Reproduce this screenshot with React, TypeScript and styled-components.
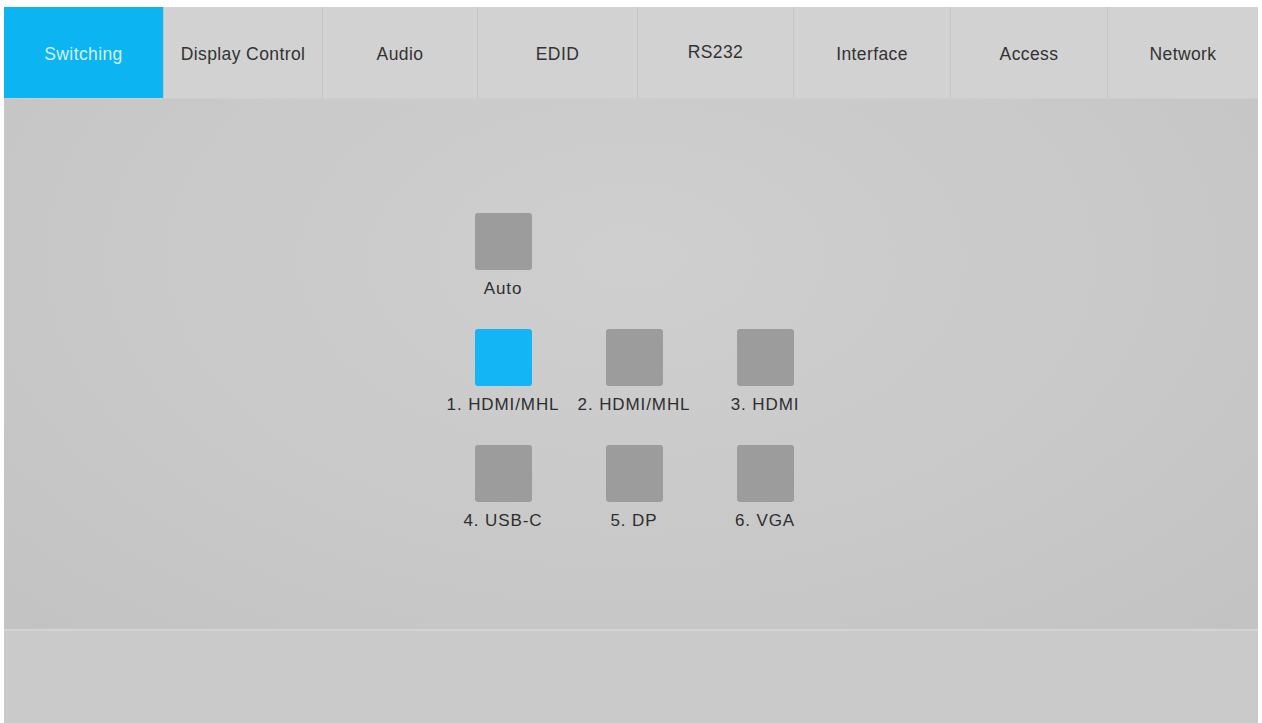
import { useState } from "react";
import styled, { createGlobalStyle } from "styled-components";

const GlobalStyle = createGlobalStyle`
  html, body {
    margin: 0;
    padding: 0;
    background: #ffffff;
  }
  body {
    font-family: "Liberation Sans", Arial, Helvetica, sans-serif;
  }
`;

const tabs = [
  "Switching",
  "Display Control",
  "Audio",
  "EDID",
  "RS232",
  "Interface",
  "Access",
  "Network",
];

const inputs = [
  { id: 1, label: "1. HDMI/MHL" },
  { id: 2, label: "2. HDMI/MHL" },
  { id: 3, label: "3. HDMI" },
  { id: 4, label: "4. USB-C" },
  { id: 5, label: "5. DP" },
  { id: 6, label: "6. VGA" },
];

export default function App() {
  const [activeTab, setActiveTab] = useState("Switching");
  const [source, setSource] = useState<number | "auto">(1);

  return (
    <>
      <GlobalStyle />
      <Panel>
        <TabBar>
          {tabs.map((t) => (
            <Tab
              key={t}
              $active={activeTab === t}
              $raised={t === "RS232"}
              onClick={() => setActiveTab(t)}
            >
              {t}
            </Tab>
          ))}
        </TabBar>
        <Main>
          <SourceGrid>
            <Cell onClick={() => setSource("auto")}>
              <Square $on={source === "auto"} />
              <Label>Auto</Label>
            </Cell>
            <Spacer />
            <Spacer />
            {inputs.map((i) => (
              <Cell key={i.id} onClick={() => setSource(i.id)}>
                <Square $on={source === i.id} />
                <Label>{i.label}</Label>
              </Cell>
            ))}
          </SourceGrid>
        </Main>
        <Footer />
      </Panel>
    </>
  );
}

const Panel = styled.div`
  margin: 7px 4px 0 4px;
  height: 716px;
  display: flex;
  flex-direction: column;
  background: #cacaca;
`;

const TabBar = styled.nav`
  display: grid;
  grid-template-columns: 159px 159px 155px 160px 156px 157px 157px 1fr;
  height: 91px;
  background: #d2d2d2;
  border-bottom: 1px solid #cdcdcd;
`;

const Tab = styled.div<{ $active: boolean; $raised: boolean }>`
  display: flex;
  align-items: center;
  justify-content: center;
  padding-top: ${(p) => (p.$raised ? "0" : "4px")};
  font-size: 17.5px;
  letter-spacing: 0.4px;
  color: ${(p) => (p.$active ? "#d4f1ff" : "#333333")};
  background: ${(p) => (p.$active ? "#0cb4f1" : "transparent")};
  border-left: 1px solid ${(p) => (p.$active ? "transparent" : "#c5c5c5")};
  cursor: pointer;

  &:first-child {
    border-left: none;
  }
`;

const Main = styled.main`
  height: 532px;
  display: flex;
  justify-content: center;
  padding-top: 114px;
  box-sizing: border-box;
  background: radial-gradient(
    ellipse at 50% 30%,
    #cfcfcf 0%,
    #cacaca 45%,
    #c3c3c3 100%
  );
  border-bottom: 2px solid #d3d3d3;
`;

const SourceGrid = styled.div`
  display: grid;
  grid-template-columns: repeat(3, 131px);
  grid-auto-rows: 116px;
  margin-left: 6px;
`;

const Cell = styled.div`
  display: flex;
  flex-direction: column;
  align-items: center;
  cursor: pointer;
`;

const Spacer = styled.div``;

const Square = styled.div<{ $on: boolean }>`
  width: 57px;
  height: 57px;
  border-radius: 3px;
  background: ${(p) => (p.$on ? "#14b5f5" : "#9c9c9c")};
`;

const Label = styled.span`
  margin-top: 9px;
  font-size: 17px;
  letter-spacing: 0.9px;
  color: #2e2e2e;
  white-space: nowrap;
`;

const Footer = styled.footer`
  flex: 1;
  background: #cacaca;
`;
